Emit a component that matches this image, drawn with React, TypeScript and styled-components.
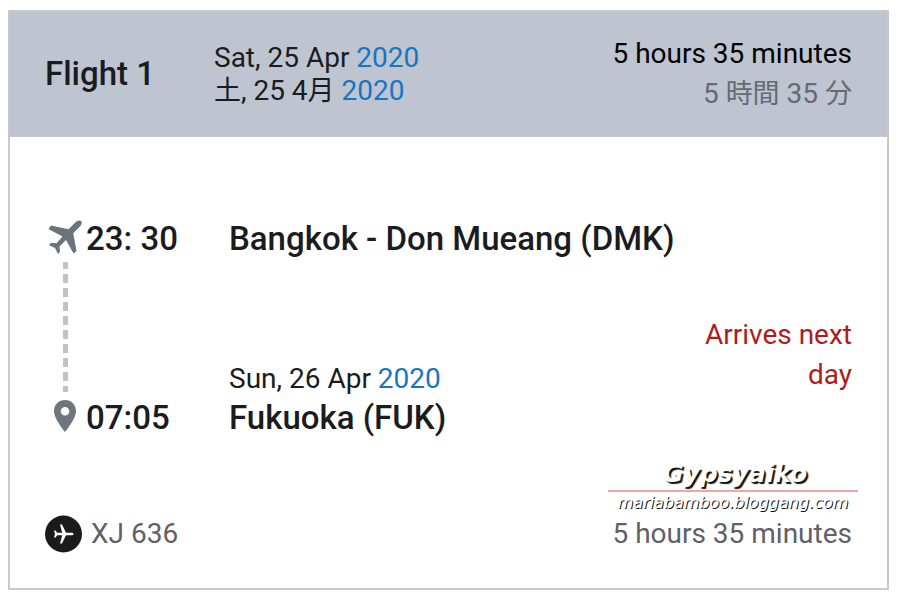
import React from "react";
import styled, { createGlobalStyle } from "styled-components";

const GlobalStyle = createGlobalStyle`
  * { box-sizing: border-box; }
  body {
    margin: 0;
    background: #fff;
    color: #1b1c1e;
    font-family: Roboto, "Noto Sans CJK JP", sans-serif;
    font-size: 28px;
    line-height: 32px;
  }
`;

const Page = styled.main`
  padding: 10px 11px 3px 8px;
`;

const Card = styled.article`
  border: 2px solid #c9c9c9;
  background: #fff;
`;

const Header = styled.header`
  display: grid;
  grid-template-columns: 169px 1fr auto;
  align-items: center;
  min-height: 125px;
  padding: 0 35px;
  background: #bec5d0;
  border-bottom: 1px solid #c9c9c9;
`;

const Title = styled.h1`
  margin: 0;
  font-size: 33px;
  font-weight: 500;
`;

const Dates = styled.div`
  display: grid;
  grid-auto-rows: 33px;
`;

const DateLine = styled.div`
  line-height: 33px;
  white-space: nowrap;
`;

const Year = styled.span`
  color: #1676c4;
`;

const Kanji = styled.span`
  font-size: 27px;
`;

const Totals = styled.div`
  display: grid;
  grid-auto-rows: 40px;
  line-height: 40px;
  text-align: right;
`;

const Duration = styled.div<{ $tone: "strong" | "soft" | "muted" }>`
  color: ${({ $tone }) =>
    $tone === "strong" ? "#000" : $tone === "soft" ? "#666a73" : "#5f6165"};
  white-space: nowrap;
`;

const Body = styled.section`
  padding: 82px 35px 35px;
`;

const Route = styled.div`
  display: grid;
  grid-template-columns: 41px 143px 1fr 160px;
  grid-template-rows: 40px 139px 40px;
`;

const Rail = styled.div`
  display: flex;
  justify-content: center;
  align-items: center;
  padding: 0 1px 4px 0;
`;

const Stop = styled.div<{ $wide?: boolean }>`
  grid-column: ${({ $wide }) => ($wide ? "3 / 5" : "auto")};
  font-size: 33px;
  font-weight: 500;
  line-height: 40px;
  white-space: nowrap;
`;

const ArrivalDate = styled.div`
  grid-column: 3;
  align-self: end;
  padding-bottom: 3px;
`;

const NextDay = styled.div`
  justify-self: end;
  align-self: end;
  padding-bottom: 3px;
  color: #b01c1c;
  line-height: 40px;
  text-align: right;
`;

const Footer = styled.footer`
  display: flex;
  justify-content: space-between;
  align-items: center;
  margin-top: 2px;
`;

const Carrier = styled.div`
  display: flex;
  align-items: center;
  gap: 9px;
  color: #5f6165;
`;

const Signature = styled.div`
  display: flex;
  flex-direction: column;
  align-items: center;
  width: 250px;
  margin: 20px -6px 0 auto;
  color: #fff;
  font-style: italic;
`;

const SignName = styled.div`
  width: 100%;
  padding-left: 4px;
  border-bottom: 2px solid #f0a6a6;
  font-family: "DejaVu Sans", sans-serif;
  font-size: 25px;
  font-weight: 700;
  line-height: 32px;
  text-align: center;
  text-shadow: 2px 2px 1px #111;
`;

const SignSite = styled.div`
  font-family: "DejaVu Sans", sans-serif;
  font-size: 16px;
  line-height: 21px;
  text-shadow: 1px 1px 0 #111;
`;

const PlaneIcon = () => (
  <svg width="36" height="36" viewBox="0 0 36 36" aria-hidden="true">
    <path
      fill="#6b747c"
      d="M34 2C35.500 3.600 34.800 5.600 33 7.400L26.200 14.300L29.500 32L26.500 34.500L19 21L12.500 27.500L13 32.500L11 35L8 29L2 26.200L4 23.800L9.500 24.300L15.500 17.500L1.500 10L4 6.600L21.500 10.200L28.500 3.300C30.300 1.500 32.800 .8 34 2Z"
    />
  </svg>
);

const Dashes = () => (
  <svg width="5" height="130" viewBox="0 0 5 130" aria-hidden="true">
    <path stroke="#c2c3c5" strokeWidth="5" strokeDasharray="9 5" strokeDashoffset="2" d="M2.500 0V130" />
  </svg>
);

const PinIcon = () => (
  <svg width="24" height="34" viewBox="0 0 24 34" aria-hidden="true">
    <path
      fill="#70767d"
      fillRule="evenodd"
      d="M12 1C5.600 1 1 5.700 1 12C1 20 12 33 12 33S23 20 23 12C23 5.700 18.400 1 12 1ZM12 8A4.300 4.300 0 1 1 12 16.600A4.300 4.300 0 1 1 12 8Z"
    />
  </svg>
);

const CarrierIcon = () => (
  <svg width="37" height="38" viewBox="0 0 37 38" aria-hidden="true">
    <circle cx="18.500" cy="19" r="18.500" fill="#1b1b1c" />
    <path
      fill="#fff"
      d="M28.500 19C28.500 20 27.500 20.300 26.500 20.300H21L17 28.500H15L17.200 20.300H12.200L10.500 22.500H9L10 19L9 15.500H10.500L12.200 17.700H17.200L15 9.500H17L21 17.700H26.500C27.500 17.700 28.500 18 28.500 19Z"
    />
  </svg>
);

export default function App() {
  return (
    <>
      <GlobalStyle />
      <Page>
        <Card>
          <Header>
            <Title>Flight 1</Title>
            <Dates>
              <DateLine>Sat, 25 Apr <Year>2020</Year></DateLine>
              <DateLine lang="ja"><Kanji>土</Kanji>, 25 4<Kanji>月</Kanji> <Year>2020</Year></DateLine>
            </Dates>
            <Totals>
              <Duration $tone="strong">5 hours 35 minutes</Duration>
              <Duration $tone="soft" lang="ja">5 <Kanji>時間</Kanji> 35 <Kanji>分</Kanji></Duration>
            </Totals>
          </Header>
          <Body>
            <Route>
              <Rail><PlaneIcon /></Rail>
              <Stop>23: 30</Stop>
              <Stop $wide>Bangkok - Don Mueang (DMK)</Stop>
              <Rail><Dashes /></Rail>
              <ArrivalDate>Sun, 26 Apr <Year>2020</Year></ArrivalDate>
              <NextDay>Arrives next day</NextDay>
              <Rail><PinIcon /></Rail>
              <Stop>07:05</Stop>
              <Stop $wide>Fukuoka (FUK)</Stop>
            </Route>
            <Signature>
              <SignName>Gypsyaiko</SignName>
              <SignSite>mariabamboo.bloggang.com</SignSite>
            </Signature>
            <Footer>
              <Carrier><CarrierIcon />XJ 636</Carrier>
              <Duration $tone="muted">5 hours 35 minutes</Duration>
            </Footer>
          </Body>
        </Card>
      </Page>
    </>
  );
}
